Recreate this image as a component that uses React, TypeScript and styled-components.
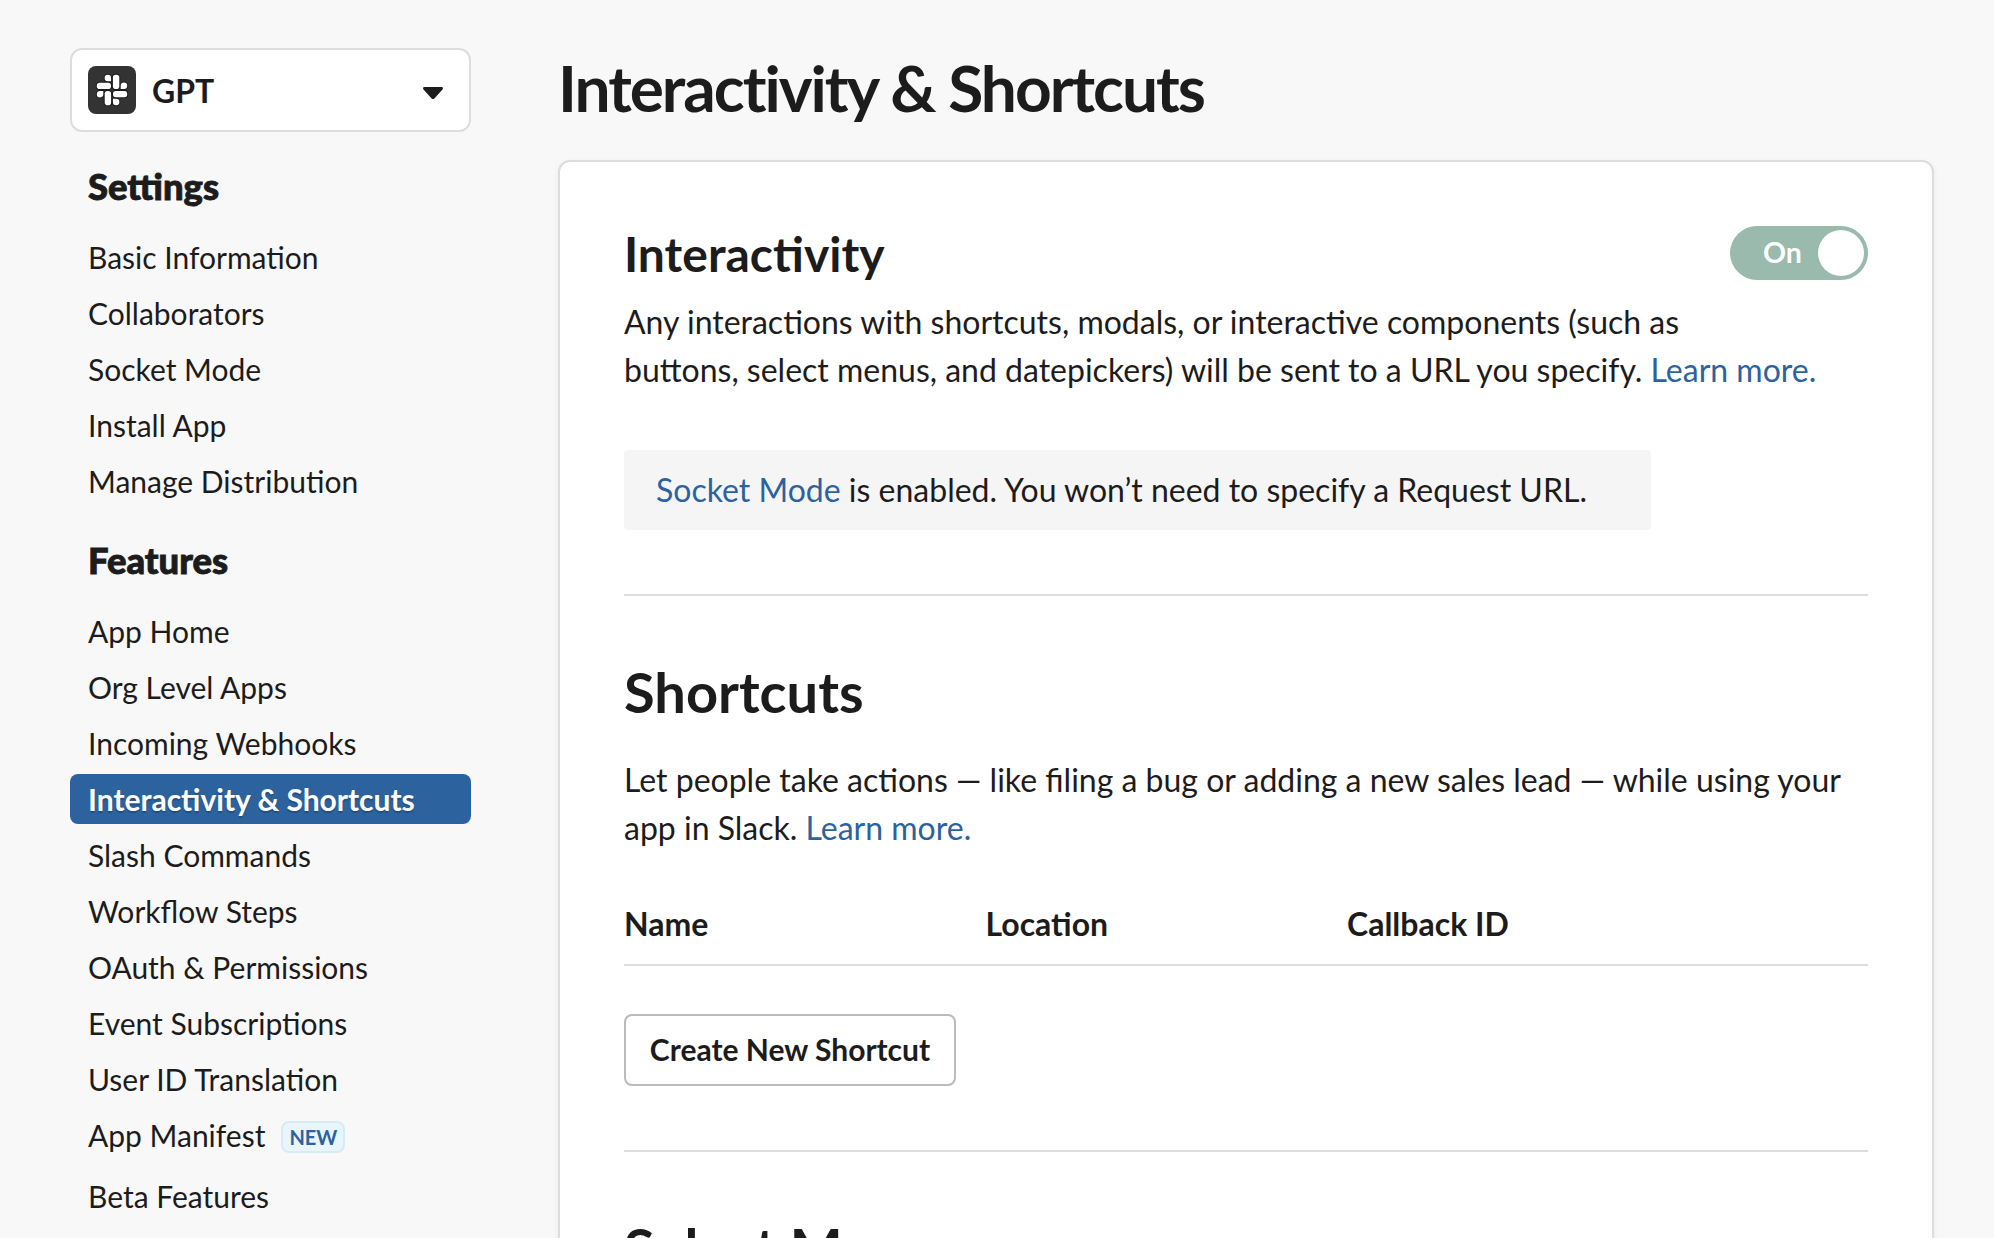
import React from "react";
import styled, { createGlobalStyle, css } from "styled-components";

const ink = "#1d1c1d";
const blue = "#2c629e";
const line = "#dddddd";

const GlobalStyle = createGlobalStyle`
  *, *::before, *::after { box-sizing: border-box; }
  html, body { margin: 0; padding: 0; background: #f8f8f8; }
  body {
    font-family: Lato, "Liberation Sans", sans-serif;
    color: ${ink};
    overflow: hidden;
    -webkit-font-smoothing: antialiased;
  }
`;

const Page = styled.div`
  display: flex;
  align-items: flex-start;
  gap: 87px;
  width: 1994px;
  height: 1238px;
  padding: 48px 60px 0 70px;
  overflow: hidden;
  background: #f8f8f8;
`;

const Sidebar = styled.aside`
  display: flex;
  flex-direction: column;
  flex: 0 0 401px;
`;

const AppSelect = styled.button`
  display: flex;
  align-items: center;
  width: 100%;
  height: 84px;
  padding: 0 26px 0 16px;
  border: 2px solid ${line};
  border-radius: 12px;
  background: #fff;
  color: ${ink};
  font: 700 32px/40px Lato, sans-serif;
  text-align: left;
`;

const AppIcon = styled.svg`
  flex: none;
  width: 48px;
  height: 48px;
  margin-right: 16px;
`;

const AppName = styled.span`
  flex: 1;
  padding-top: 1px;
`;

const Caret = styled.svg`
  flex: none;
  width: 20px;
  height: 12px;
  margin-top: 6px;
`;

const NavHeading = styled.h2`
  margin: 32px 0 24px;
  padding-left: 18px;
  font-size: 36.4px;
  line-height: 44px;
  font-weight: 900;
  -webkit-text-stroke: 0.9px ${ink};
`;

const NavList = styled.ul`
  display: flex;
  flex-direction: column;
  gap: 6px;
  margin: 0;
  padding: 0;
  list-style: none;
`;

const NavItem = styled.li<{ $active?: boolean; $tall?: boolean }>`
  display: flex;
  align-items: flex-start;
  height: ${(p) => (p.$tall ? 55 : 50)}px;
  padding: 7px 18px 0;
  border-radius: 8px;
  font-size: 30px;
  line-height: 36px;
  white-space: nowrap;
  ${(p) =>
    p.$active &&
    css`
      background: ${blue};
      color: #fff;
      font-weight: 700;
      text-shadow: 0 2px 1px rgba(0, 0, 0, 0.2);
    `}
`;

const Badge = styled.span`
  display: flex;
  align-items: center;
  justify-content: center;
  width: 64px;
  height: 32px;
  margin: 4px 0 0 16px;
  border: 2px solid #d5ebf5;
  border-radius: 8px;
  background: #e8f5fa;
  color: ${blue};
  font-size: 20px;
  line-height: 24px;
  font-weight: 700;
`;

const Main = styled.main`
  flex: 1;
  min-width: 0;
`;

const PageTitle = styled.h1`
  margin: 0 0 32px;
  font-size: 64px;
  line-height: 80px;
  font-weight: 700;
  letter-spacing: -2px;
`;

const Card = styled.section`
  height: 1200px;
  padding: 62px 64px 0;
  border: 2px solid ${line};
  border-radius: 12px;
  background: #fff;
  box-shadow: 0 2px 6px rgba(0, 0, 0, 0.06);
`;

const CardHeader = styled.div`
  display: flex;
  align-items: center;
  justify-content: space-between;
  height: 58px;
  margin-bottom: 16px;
`;

const Subtitle = styled.h3`
  margin: 0;
  padding-top: 2px;
  font-size: 48px;
  line-height: 58px;
  font-weight: 700;
`;

const SectionTitle = styled.h2`
  margin: 62px 0 31px;
  font-size: 56px;
  line-height: 67px;
  font-weight: 700;
`;

const Toggle = styled.div`
  display: flex;
  align-items: center;
  justify-content: space-between;
  width: 138px;
  height: 54px;
  padding: 0 4px 0 33px;
  border-radius: 27px;
  background: #99baac;
  color: #fff;
  font-size: 28.5px;
  line-height: 34px;
  font-weight: 700;
`;

const ToggleLabel = styled.span`
  padding-bottom: 2px;
`;

const Knob = styled.span`
  width: 46px;
  height: 46px;
  border-radius: 50%;
  background: #fff;
`;

const Text = styled.p`
  margin: 0;
  font-size: 32px;
  line-height: 48px;
  white-space: nowrap;
`;

const Link = styled.a`
  color: ${blue};
  text-decoration: none;
`;

const Notice = styled.div`
  width: 1027px;
  margin: 56px 0 64px;
  padding: 16px 32px;
  border-radius: 4px;
  background: #f5f5f5;
`;

const Rule = styled.hr`
  height: 2px;
  margin: 0;
  border: 0;
  background: ${line};
`;

const TableHead = styled.div`
  display: grid;
  grid-template-columns: 361.5px 361.5px 1fr;
  margin: 48px 0;
  padding-bottom: 16px;
  border-bottom: 2px solid ${line};
  font-size: 32px;
  line-height: 48px;
  font-weight: 700;
`;

const Button = styled.button`
  display: flex;
  align-items: center;
  justify-content: center;
  width: 332px;
  height: 72px;
  margin-bottom: 64px;
  padding: 0 0 2px;
  border: 2px solid #bbbbbb;
  border-radius: 8px;
  background: #fff;
  color: ${ink};
  font: 700 30px/36px Lato, sans-serif;
  white-space: nowrap;
`;

type Entry = { label: string; active?: boolean; badge?: string };

const settings: Entry[] = [
  { label: "Basic Information" },
  { label: "Collaborators" },
  { label: "Socket Mode" },
  { label: "Install App" },
  { label: "Manage Distribution" },
];

const features: Entry[] = [
  { label: "App Home" },
  { label: "Org Level Apps" },
  { label: "Incoming Webhooks" },
  { label: "Interactivity & Shortcuts", active: true },
  { label: "Slash Commands" },
  { label: "Workflow Steps" },
  { label: "OAuth & Permissions" },
  { label: "Event Subscriptions" },
  { label: "User ID Translation" },
  { label: "App Manifest", badge: "NEW" },
  { label: "Beta Features" },
];

const Nav = ({ title, items }: { title: string; items: Entry[] }) => (
  <nav>
    <NavHeading>{title}</NavHeading>
    <NavList>
      {items.map((item) => (
        <NavItem key={item.label} $active={item.active} $tall={!!item.badge}>
          {item.label}
          {item.badge && <Badge>{item.badge}</Badge>}
        </NavItem>
      ))}
    </NavList>
  </nav>
);

// One arm of the pinwheel: a pill and its droplet, repeated at quarter turns.
const Arm = ({ turn }: { turn: number }) => (
  <g transform={`rotate(${turn} 24 24)`}>
    <rect x="24.9" y="8.8" width="6.4" height="14.2" rx="2.8" />
    <path d="M23.1 15.3h-3.2a3.25 3.25 0 1 1 3.2-3.2z" />
  </g>
);

const turns = [0, 90, 180, 270];

// The dark outlines lie under all the white shapes, so no arm cuts into its neighbour.
const SlackIcon = () => (
  <AppIcon viewBox="0 0 48 48" aria-hidden="true">
    <rect width="48" height="48" rx="8" fill="#333" />
    <g fill="#1a1a1a" stroke="#1a1a1a" strokeWidth="2">
      {turns.map((t) => (
        <Arm key={t} turn={t} />
      ))}
    </g>
    <g fill="#fff">
      {turns.map((t) => (
        <Arm key={t} turn={t} />
      ))}
    </g>
  </AppIcon>
);

export default function App() {
  return (
    <>
      <GlobalStyle />
      <Page>
        <Sidebar>
          <AppSelect>
            <SlackIcon />
            <AppName>GPT</AppName>
            <Caret viewBox="0 0 20 12" aria-hidden="true">
              <path
                d="M1.4 0h17.2c1.3 0 1.8 1.5.9 2.4l-8.1 9c-.8.8-2 .8-2.8 0l-8.1-9C-.4 1.5.1 0 1.4 0z"
                fill={ink}
              />
            </Caret>
          </AppSelect>
          <Nav title="Settings" items={settings} />
          <Nav title="Features" items={features} />
        </Sidebar>
        <Main>
          <PageTitle>Interactivity &amp; Shortcuts</PageTitle>
          <Card>
            <CardHeader>
              <Subtitle>Interactivity</Subtitle>
              <Toggle>
                <ToggleLabel>On</ToggleLabel>
                <Knob />
              </Toggle>
            </CardHeader>
            <Text>
              Any interactions with shortcuts, modals, or interactive components (such as
              <br />
              buttons, select menus, and datepickers) will be sent to a URL you specify.{" "}
              <Link>Learn more.</Link>
            </Text>
            <Notice>
              <Text>
                <Link>Socket Mode</Link> is enabled. You won’t need to specify a Request URL.
              </Text>
            </Notice>
            <Rule />
            <SectionTitle>Shortcuts</SectionTitle>
            <Text>
              Let people take actions — like filing a bug or adding a new sales lead — while using your
              <br />
              app in Slack. <Link>Learn more.</Link>
            </Text>
            <TableHead>
              <span>Name</span>
              <span>Location</span>
              <span>Callback ID</span>
            </TableHead>
            <Button>Create New Shortcut</Button>
            <Rule />
            <SectionTitle>Select Menus</SectionTitle>
          </Card>
        </Main>
      </Page>
    </>
  );
}
